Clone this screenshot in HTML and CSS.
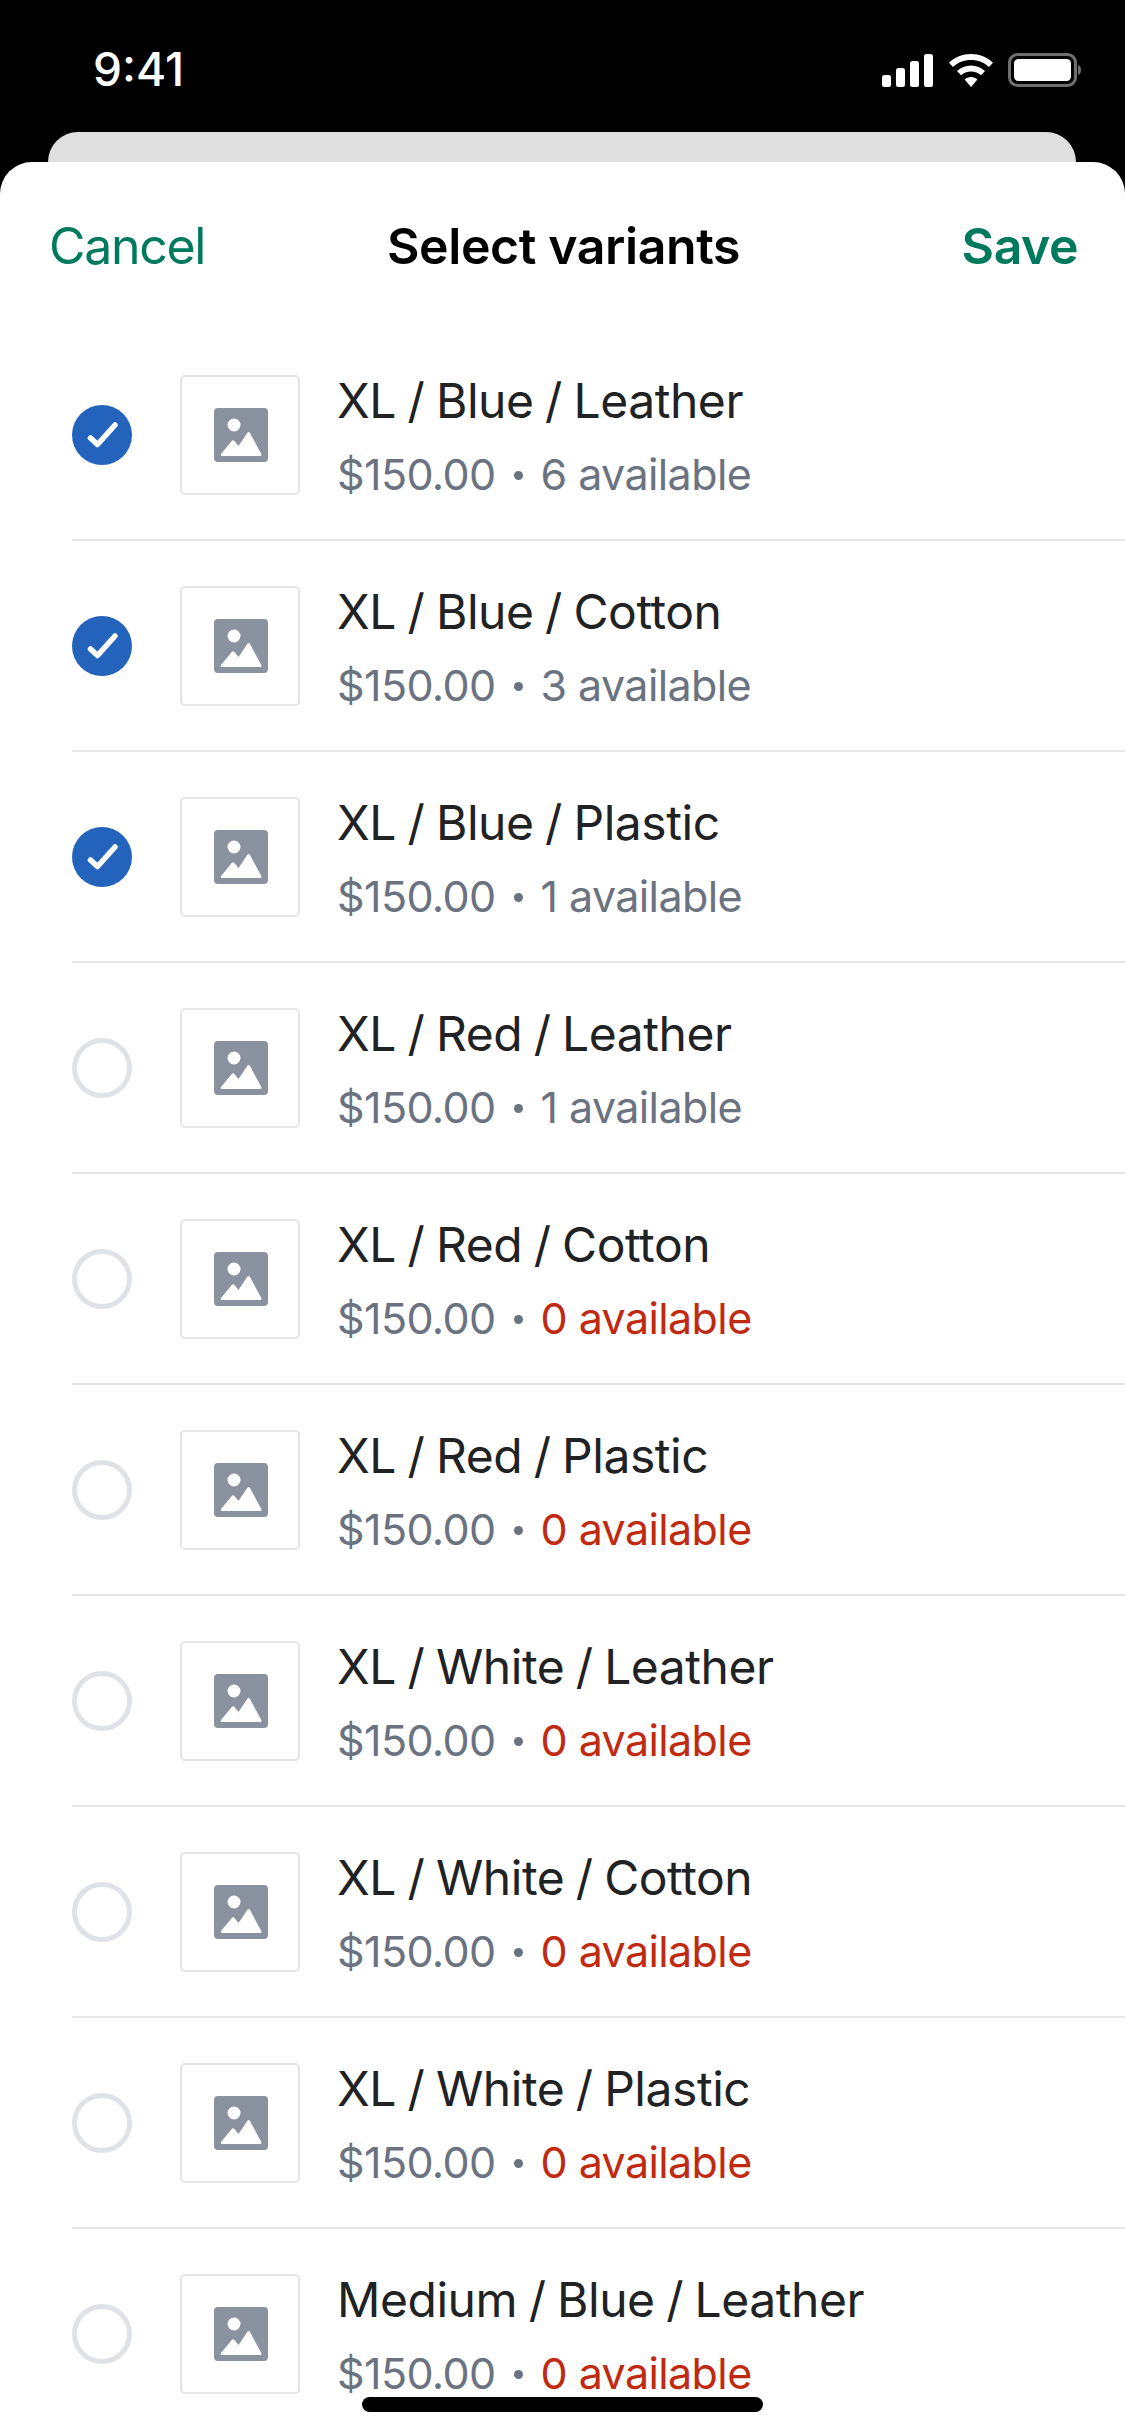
FILE: index.html
```html
<!DOCTYPE html>
<html lang="en">
<head>
    <meta charset="UTF-8">
    <meta name="viewport" content="width=device-width, initial-scale=1.0">
    <title>Select variants</title>
    <link rel="stylesheet" href="styles.css">
</head>
<body>
    <svg class="sprites" width="0" height="0">
        <symbol id="thumb-icon" viewBox="0 0 54 54">
            <path fill="#8a92a0" fill-rule="evenodd" d="M4 0h46a4 4 0 0 1 4 4v46a4 4 0 0 1-4 4H4a4 4 0 0 1-4-4V4a4 4 0 0 1 4-4zM26.500 17a6.500 6.500 0 1 0-13 0 6.500 6.500 0 0 0 13 0zM8 48h38c1.200 0 1.800-1 1.300-2L36 25c-.8-1.300-2-1.300-2.800 0L24.500 38l-4-5c-.8-.9-1.900-.8-2.700 0L7 46c-.6.800 0 2 1 2z"/>
        </symbol>
        <symbol id="check-icon" viewBox="0 0 60 60">
            <circle cx="30" cy="30" r="30" fill="#2463bc"/>
            <path fill="none" stroke="#fff" stroke-width="5.500" stroke-linecap="round" stroke-linejoin="round" d="M18.500 33l7 6.500L43 20"/>
        </symbol>
    </svg>

    <div class="status-bar">
        <div class="time">9:41</div>
        <div class="status-icons">
            <svg width="52" height="33" viewBox="0 0 52 33"><g fill="#fff">
                <rect x="0" y="21" width="9" height="12" rx="2.500"/>
                <rect x="14" y="14" width="9" height="19" rx="2.500"/>
                <rect x="28" y="7" width="9" height="26" rx="2.500"/>
                <rect x="42" y="0" width="9" height="33" rx="2.500"/>
            </g></svg>
            <svg width="46" height="33" viewBox="0 0 46 33"><g fill="#fff">
                <path d="M23 0C14.500 0 6.800 3.300 1 8.700l4 4.300C9.700 8.600 16 6 23 6s13.300 2.600 18 7l4-4.300C39.200 3.300 31.500 0 23 0z"/>
                <path d="M23 11.500c-5.400 0-10.300 2.100-14 5.500l4 4.300c2.600-2.400 6.100-3.900 10-3.900s7.400 1.500 10 3.900l4-4.300c-3.700-3.400-8.600-5.500-14-5.500z"/>
                <path d="M23 23c-2.500 0-4.700.900-6.400 2.500L23 33l6.400-7.500C27.700 23.900 25.500 23 23 23z"/>
            </g></svg>
            <svg width="73" height="34" viewBox="0 0 73 34">
                <rect x="1.500" y="1.500" width="66" height="31" rx="8" fill="none" stroke="#6f6f6f" stroke-width="3"/>
                <rect x="6" y="6" width="57" height="22" rx="4.500" fill="#fff"/>
                <path d="M70 12c2 .5 3 2.500 3 5s-1 4.500-3 5z" fill="#6f6f6f"/>
            </svg>
        </div>
    </div>

    <div class="back-card"></div>

    <div class="sheet">
        <div class="sheet-header">
            <div class="cancel-btn">Cancel</div>
            <div class="sheet-title">Select variants</div>
            <div class="save-btn">Save</div>
        </div>

        <div class="variant-row">
            <svg class="check" viewBox="0 0 60 60"><use href="#check-icon"/></svg>
            <div class="thumb"><svg class="thumb-img" viewBox="0 0 54 54"><use href="#thumb-icon"/></svg></div>
            <div class="variant-info">
                <div class="variant-name">XL / Blue / Leather</div>
                <div class="variant-meta">$150.00<span class="dot"></span>6 available</div>
            </div>
        </div>
        <div class="variant-row">
            <svg class="check" viewBox="0 0 60 60"><use href="#check-icon"/></svg>
            <div class="thumb"><svg class="thumb-img" viewBox="0 0 54 54"><use href="#thumb-icon"/></svg></div>
            <div class="variant-info">
                <div class="variant-name">XL / Blue / Cotton</div>
                <div class="variant-meta">$150.00<span class="dot"></span>3 available</div>
            </div>
        </div>
        <div class="variant-row">
            <svg class="check" viewBox="0 0 60 60"><use href="#check-icon"/></svg>
            <div class="thumb"><svg class="thumb-img" viewBox="0 0 54 54"><use href="#thumb-icon"/></svg></div>
            <div class="variant-info">
                <div class="variant-name">XL / Blue / Plastic</div>
                <div class="variant-meta">$150.00<span class="dot"></span>1 available</div>
            </div>
        </div>
        <div class="variant-row">
            <div class="radio"></div>
            <div class="thumb"><svg class="thumb-img" viewBox="0 0 54 54"><use href="#thumb-icon"/></svg></div>
            <div class="variant-info">
                <div class="variant-name">XL / Red / Leather</div>
                <div class="variant-meta">$150.00<span class="dot"></span>1 available</div>
            </div>
        </div>
        <div class="variant-row">
            <div class="radio"></div>
            <div class="thumb"><svg class="thumb-img" viewBox="0 0 54 54"><use href="#thumb-icon"/></svg></div>
            <div class="variant-info">
                <div class="variant-name">XL / Red / Cotton</div>
                <div class="variant-meta">$150.00<span class="dot"></span><span class="none-left">0 available</span></div>
            </div>
        </div>
        <div class="variant-row">
            <div class="radio"></div>
            <div class="thumb"><svg class="thumb-img" viewBox="0 0 54 54"><use href="#thumb-icon"/></svg></div>
            <div class="variant-info">
                <div class="variant-name">XL / Red / Plastic</div>
                <div class="variant-meta">$150.00<span class="dot"></span><span class="none-left">0 available</span></div>
            </div>
        </div>
        <div class="variant-row">
            <div class="radio"></div>
            <div class="thumb"><svg class="thumb-img" viewBox="0 0 54 54"><use href="#thumb-icon"/></svg></div>
            <div class="variant-info">
                <div class="variant-name">XL / White / Leather</div>
                <div class="variant-meta">$150.00<span class="dot"></span><span class="none-left">0 available</span></div>
            </div>
        </div>
        <div class="variant-row">
            <div class="radio"></div>
            <div class="thumb"><svg class="thumb-img" viewBox="0 0 54 54"><use href="#thumb-icon"/></svg></div>
            <div class="variant-info">
                <div class="variant-name">XL / White / Cotton</div>
                <div class="variant-meta">$150.00<span class="dot"></span><span class="none-left">0 available</span></div>
            </div>
        </div>
        <div class="variant-row">
            <div class="radio"></div>
            <div class="thumb"><svg class="thumb-img" viewBox="0 0 54 54"><use href="#thumb-icon"/></svg></div>
            <div class="variant-info">
                <div class="variant-name">XL / White / Plastic</div>
                <div class="variant-meta">$150.00<span class="dot"></span><span class="none-left">0 available</span></div>
            </div>
        </div>
        <div class="variant-row">
            <div class="radio"></div>
            <div class="thumb"><svg class="thumb-img" viewBox="0 0 54 54"><use href="#thumb-icon"/></svg></div>
            <div class="variant-info">
                <div class="variant-name">Medium / Blue / Leather</div>
                <div class="variant-meta">$150.00<span class="dot"></span><span class="none-left">0 available</span></div>
            </div>
        </div>
    </div>

    <div class="home-indicator"></div>
</body>
</html>
```

FILE: styles.css
```css
* {
    margin: 0;
    padding: 0;
    box-sizing: border-box;
}
html, body {
    height: 2436px;
    overflow: hidden;
}
body {
    position: relative;
    background-color: #000;
    color: #202223;
    font-family: Inter, "Liberation Sans", sans-serif;
}
.sprites {
    display: block;
    height: 0;
}
.status-bar {
    height: 132px;
    padding: 46px 44px 0 93px;
    display: flex;
    justify-content: space-between;
    align-items: flex-start;
    color: #fff;
}
.time {
    font-size: 46px;
    line-height: 46px;
    font-weight: 500;
}
.status-icons {
    display: flex;
    align-items: center;
    gap: 14px;
    padding-top: 7px;
}
.back-card {
    height: 40px;
    margin: 0 49px -10px 48px;
    background-color: #dfdfdf;
    border-radius: 30px 30px 0 0;
}
.sheet {
    height: 2274px;
    background-color: #fff;
    border-radius: 32px 32px 0 0;
    overflow: hidden;
}
.sheet-header {
    height: 168px;
    padding: 0 47px 0 49px;
    display: grid;
    grid-template-columns: 1fr auto 1fr;
    align-items: center;
}
.cancel-btn {
    font-size: 50px;
    letter-spacing: -1.3px;
    color: #007a5c;
}
.save-btn {
    font-size: 50px;
    font-weight: 600;
    letter-spacing: -0.5px;
    text-align: right;
    color: #007a5c;
}
.sheet-title {
    font-size: 50px;
    font-weight: 600;
    letter-spacing: -0.4px;
    color: #000;
}
.variant-row {
    height: 211px;
    margin-left: 72px;
    display: flex;
    align-items: center;
    border-bottom: 2px solid #e4e5e7;
}
.check, .radio {
    width: 60px;
    height: 60px;
    flex-shrink: 0;
}
.radio {
    border: 5px solid #dfe2e6;
    border-radius: 50%;
}
.thumb {
    width: 120px;
    height: 120px;
    margin-left: 48px;
    flex-shrink: 0;
    display: flex;
    align-items: center;
    justify-content: center;
    border: 2px solid #e4e5e7;
    border-radius: 5px;
}
.thumb-img {
    width: 54px;
    height: 54px;
    margin-left: 2px;
}
.variant-info {
    margin-left: 37px;
}
.variant-name {
    font-size: 48px;
    line-height: 60px;
    letter-spacing: -0.45px;
    word-spacing: -1.5px;
    margin-bottom: 18px;
}
.variant-meta {
    display: flex;
    align-items: center;
    font-size: 43px;
    line-height: 50px;
    letter-spacing: -0.6px;
    color: #6b7280;
}
.dot {
    width: 9px;
    height: 9px;
    margin: 4px 18px 0 18px;
    border-radius: 50%;
    background-color: #6b7280;
}
.none-left {
    color: #bf2a10;
}
.home-indicator {
    position: absolute;
    left: 362px;
    top: 2397px;
    width: 401px;
    height: 15px;
    border-radius: 8px;
    background-color: #000;
}
```
